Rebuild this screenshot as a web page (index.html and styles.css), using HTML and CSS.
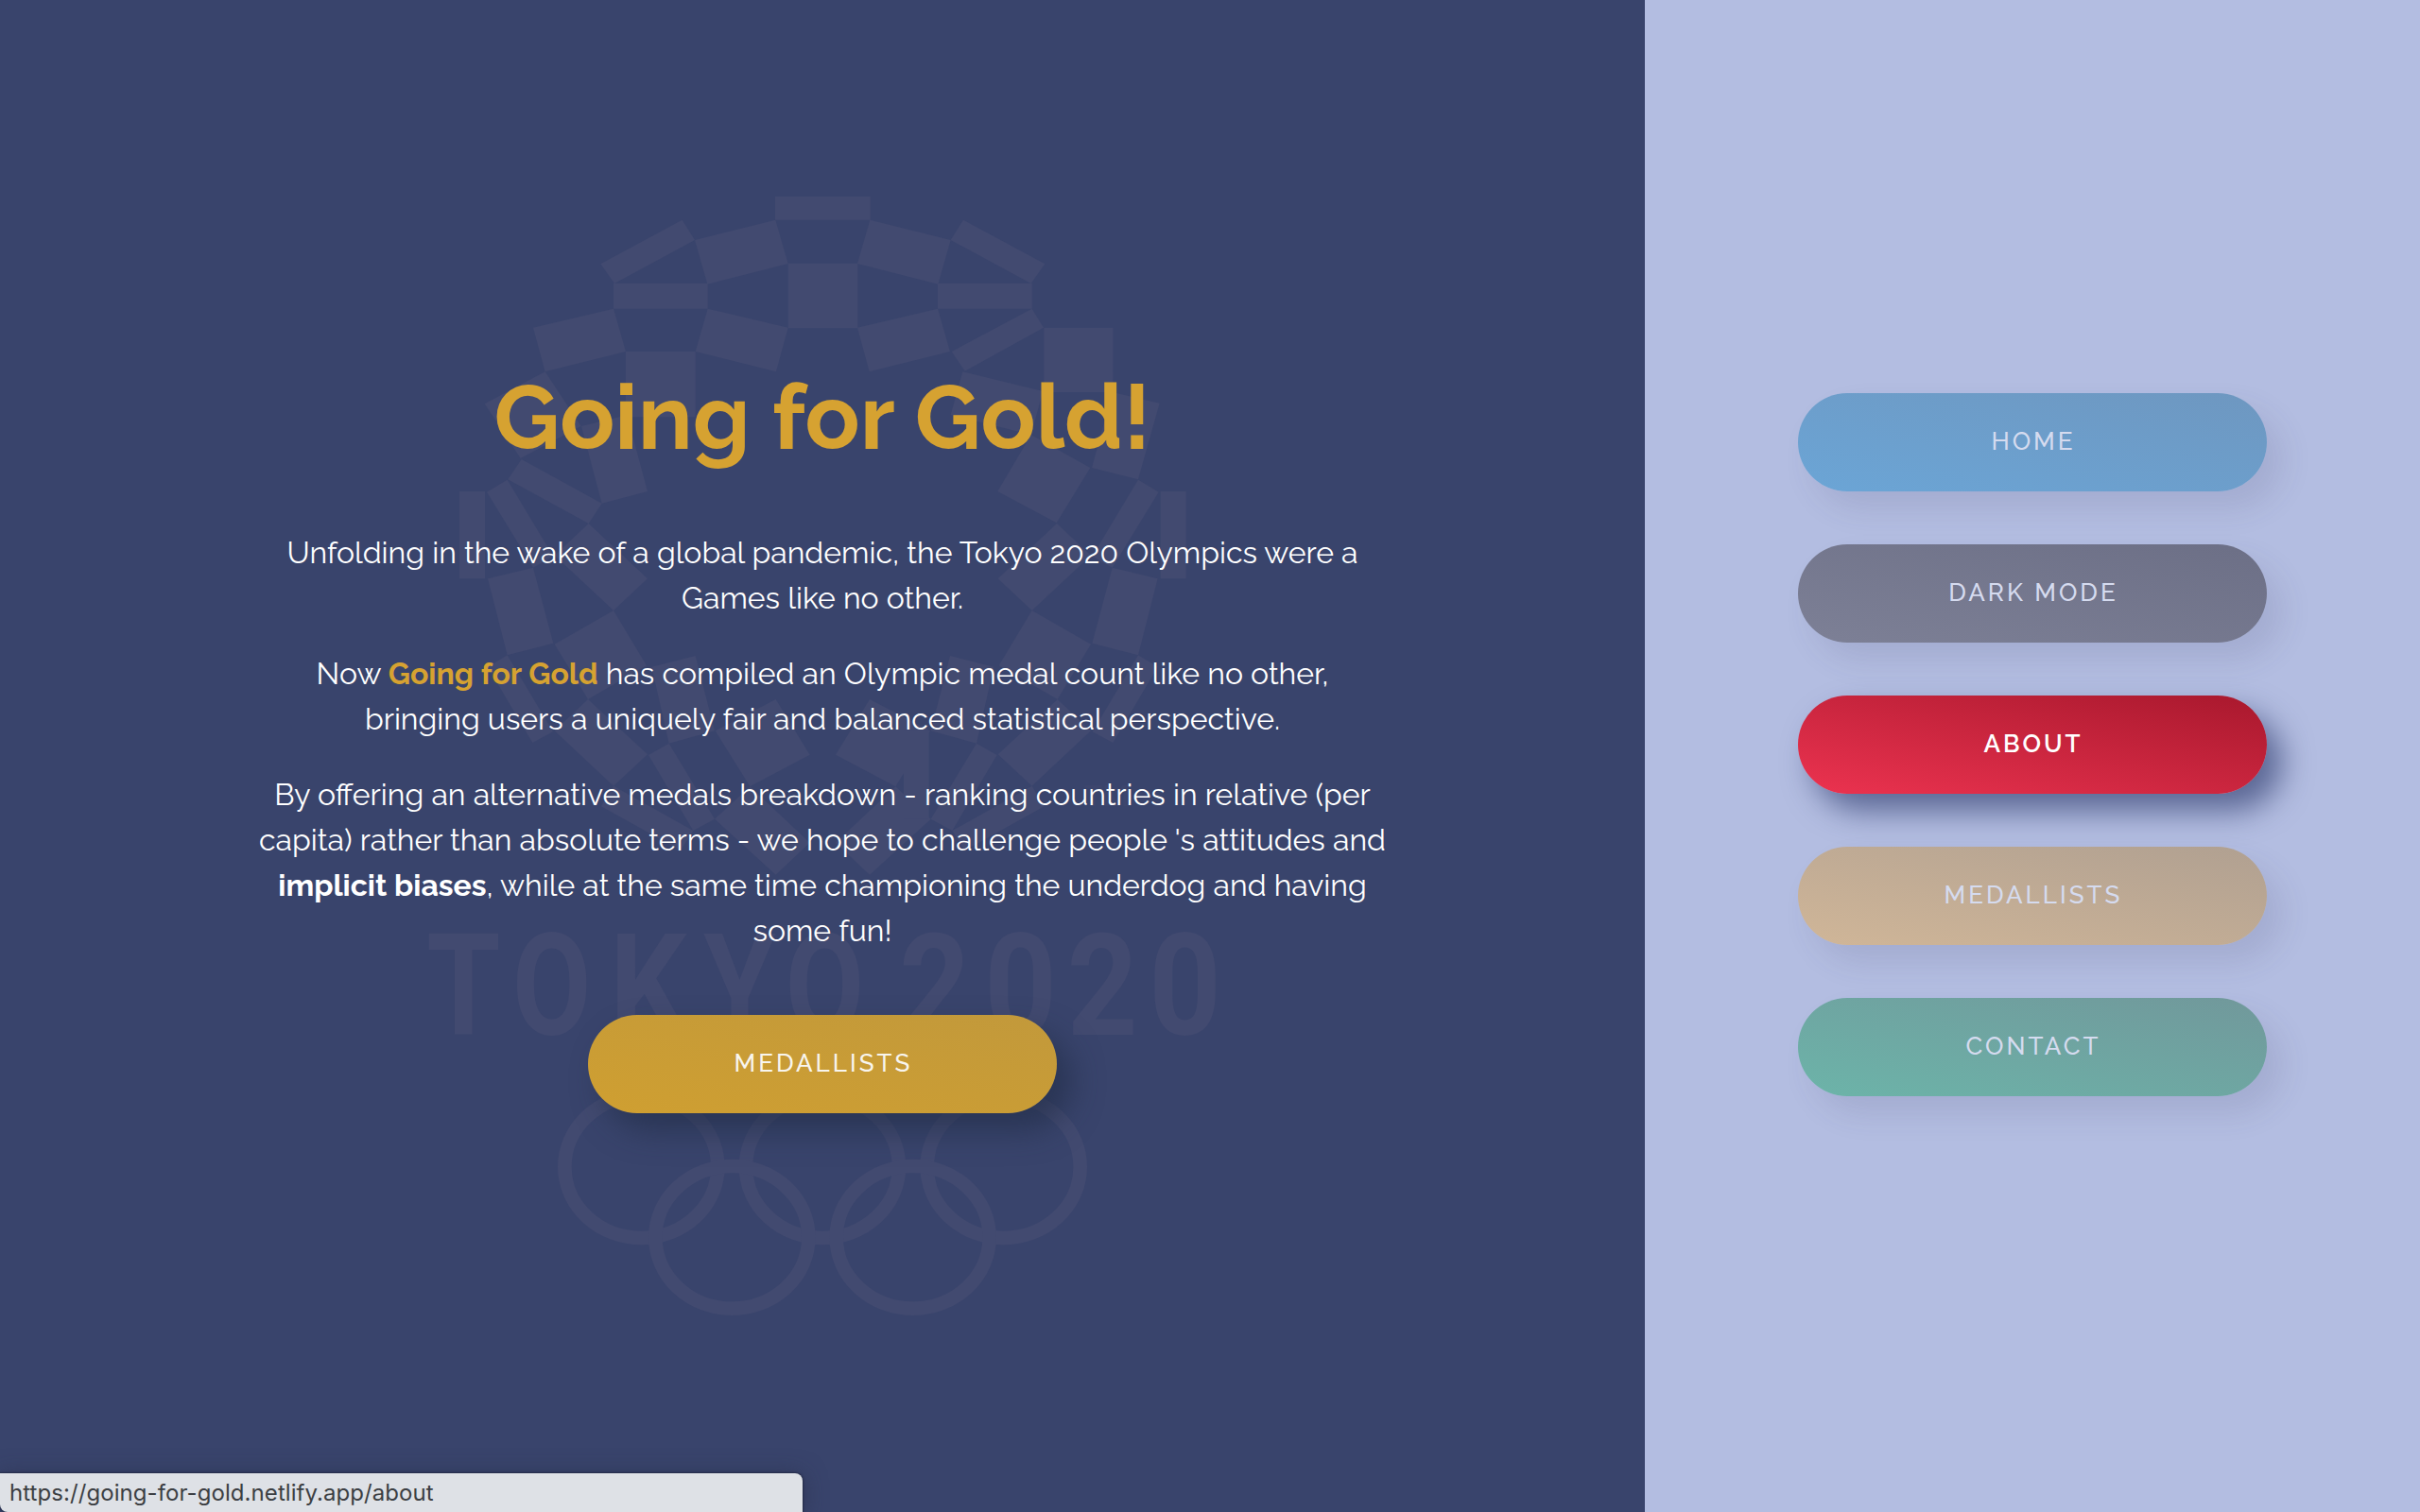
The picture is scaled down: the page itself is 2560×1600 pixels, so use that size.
FILE: index.html
```html
<!DOCTYPE html>
<html lang="en">
<head>
<meta charset="utf-8">
<title>Going for Gold</title>
<link rel="stylesheet" href="styles.css">
</head>
<body>
<div class="page">
  <main class="content">
    <svg class="watermark" viewBox="-30 0 2640 3690" aria-hidden="true">
      <defs>
        <!-- Left half of the chequered ring where it is symmetrical -->
        <g id="half">
          <path d="M845 158 885 222 630 360 586 298ZM885 222 1141 158 1181 297 925 362ZM627 360H926V440H627ZM926 440 1181 500 1143 640 887 576Z"/>
          <path d="M290 983 225 1022 372 1262 436 1226ZM138 1020H219V1297H138ZM548 1122 735 1297 627 1398 440 1223ZM228 1297 372 1262 436 1502 290 1540ZM627 1398 732 1573 546 1680 440 1505Z"/>
          <path d="M290 1540 228 1577 370 1818 435 1783ZM546 1680 735 1855 627 1955 440 1780ZM748 1577 887 1542 948 1780 803 1820ZM803 1820 738 1857 880 2097 948 2060ZM627 1955 588 2020 840 2160 880 2097Z"/>
          <path d="M1142 1680 1250 1856 1060 1957 950 1780ZM1060 1957 1250 2135 1142 2237 948 2060Z"/>
        </g>
        <clipPath id="frame"><path d="M0 0H2538V3637H0Z"/></clipPath>
      </defs>
      <g class="emblem">
        <use href="#half"/>
        <use href="#half" transform="translate(2582) scale(-1 1)"/>
        <path d="M1140 84H1442V158H1140ZM1181 296H1402V502H1181Z"/>
        <path d="M372 500 627 440 666 576 410 640ZM666 576H887V784H666ZM410 640 524 813 332 915 218 742ZM525 813 670 778 735 1020 590 1058ZM335 918 590 1058 548 1122 292 982Z"/>
        <path d="M1955 440 1992 500 1742 638 1700 576ZM1993 500H2212V705H1993ZM1735 640 1990 702 1952 840 1697 777ZM2210 705 2360 740 2292 982 2145 945ZM1952 840 2140 945 2033 1120 1846 1020Z"/>
        <path d="M1548 1780H1628V2060H1548Z"/>
        <text class="mark-tm" x="2120" y="2020">TM</text>
      </g>
      <g class="wordmark">
        <text x="34" y="2745" textLength="235" lengthAdjust="spacingAndGlyphs">T</text>
        <text x="306" y="2745" textLength="250" lengthAdjust="spacingAndGlyphs">O</text>
        <text x="615" y="2745" textLength="245" lengthAdjust="spacingAndGlyphs">K</text>
        <text x="913" y="2745" textLength="229" lengthAdjust="spacingAndGlyphs">Y</text>
        <text x="1172" y="2745" textLength="250" lengthAdjust="spacingAndGlyphs">O</text>
        <text x="1534" y="2745" textLength="225" lengthAdjust="spacingAndGlyphs">2</text>
        <text x="1804" y="2745" textLength="230" lengthAdjust="spacingAndGlyphs">0</text>
        <text x="2066" y="2745" textLength="225" lengthAdjust="spacingAndGlyphs">2</text>
        <text x="2326" y="2745" textLength="230" lengthAdjust="spacingAndGlyphs">0</text>
      </g>
      <g class="rings" clip-path="url(#frame)">
        <ellipse cx="715" cy="3164" rx="243" ry="226"/>
        <ellipse cx="1290" cy="3164" rx="243" ry="226"/>
        <ellipse cx="1865" cy="3164" rx="243" ry="226"/>
        <ellipse cx="1003" cy="3388" rx="243" ry="226"/>
        <ellipse cx="1577" cy="3388" rx="243" ry="226"/>
      </g>
    </svg>
    <article class="about">
      <h1 class="title">Going for Gold!</h1>
      <p>Unfolding in the wake of a global pandemic, the Tokyo 2020 Olympics were a Games like no other.</p>
      <p>Now <strong class="gold">Going for Gold</strong> has compiled an Olympic medal count like no other, bringing users a uniquely fair and balanced statistical perspective.</p>
      <p>By offering an alternative medals breakdown - ranking countries in relative (per capita) rather than absolute terms - we hope to challenge people 's attitudes and <strong>implicit biases</strong>, while at the same time championing the underdog and having some fun!</p>
      <a class="button button-cta">MEDALLISTS</a>
    </article>
  </main>
  <nav class="sidebar">
    <a class="button dim blue">HOME</a>
    <a class="button dim grey">DARK MODE</a>
    <a class="button active">ABOUT</a>
    <a class="button dim tan">MEDALLISTS</a>
    <a class="button dim green">CONTACT</a>
  </nav>
</div>
<div class="status"><span class="status-text">https://going-for-gold.netlify.app/about</span></div>
</body>
</html>
```
FILE: styles.css
```css
* { box-sizing: border-box; }
body {
  margin: 0;
  font-family: Raleway, Lato, sans-serif;
  background: #39446c;
  overflow: hidden;
}
.page {
  display: grid;
  grid-template-columns: 1740px 1fr;
  height: 1600px;
}
.content {
  position: relative;
  display: flex;
  justify-content: center;
  background: #39446c;
}
.watermark {
  position: absolute;
  top: 180px;
  left: 430px;
  width: 880px;
  height: 1230px;
}
.emblem, .wordmark { fill: #424a70; }
.wordmark { font: 700 450px Roboto, sans-serif; }
.mark-tm { font: 500 96px Roboto, sans-serif; fill: #3d466d; }
.rings { fill: none; stroke: #424a70; stroke-width: 44; }
.about {
  position: relative;
  width: 1200px;
  padding-top: 369px;
  display: flex;
  flex-direction: column;
  align-items: center;
  text-align: center;
  color: #fff;
}
.title {
  margin: 0 0 48px;
  font-size: 96px;
  line-height: 144px;
  font-weight: 700;
  color: #d6a231;
}
.about p {
  margin: 0 0 32px;
  font-size: 32px;
  line-height: 48px;
}
.about strong { font-weight: 700; }
.about .gold { color: #d6a231; }
.button {
  flex: none;
  display: flex;
  align-items: center;
  justify-content: center;
  width: 496px;
  height: 104px;
  padding: 0 0 2px 2px;
  border-radius: 52px;
  font-size: 26px;
  font-weight: 500;
  letter-spacing: 3px;
  color: #fff;
}
.button-cta {
  margin-top: 33px;
  color: #f8f5ee;
  background: linear-gradient(to top right, #cf9f31, #c2993b);
  box-shadow: 16px 18px 32px rgba(32, 43, 68, .6);
}
.sidebar {
  display: flex;
  flex-direction: column;
  align-items: center;
  gap: 56px;
  padding-top: 416px;
  background: #b3bde1;
}
.dim {
  color: #d5dbef;
  box-shadow: 16px 18px 32px rgba(60, 60, 100, .13);
}
.blue { background: linear-gradient(to top right, #6ba5d6, #6e97c0); }
.grey { background: linear-gradient(to top right, #7d8096, #6c6f86); }
.tan { background: linear-gradient(to top right, #d0b698, #b0a091); }
.green { background: linear-gradient(to top right, #6cb4a9, #71989b); }
.active {
  font-weight: 600;
  background: linear-gradient(to top right, #ec3350, #a8182d);
  box-shadow: 16px 18px 32px rgba(32, 45, 96, .6);
}
.status {
  position: absolute;
  left: 0;
  bottom: 0;
  width: 849px;
  height: 41px;
  padding-left: 10px;
  display: flex;
  align-items: center;
  background: #dee1e6;
  border-radius: 0 8px 0 8px;
  box-shadow: 0 0 2px 1px rgba(30, 35, 60, .7), 0 2px 24px rgba(40, 45, 70, .6);
}
.status-text {
  font: 24px/40px Inter, Roboto, sans-serif;
  letter-spacing: .07px;
  color: #3c3f43;
}
```
